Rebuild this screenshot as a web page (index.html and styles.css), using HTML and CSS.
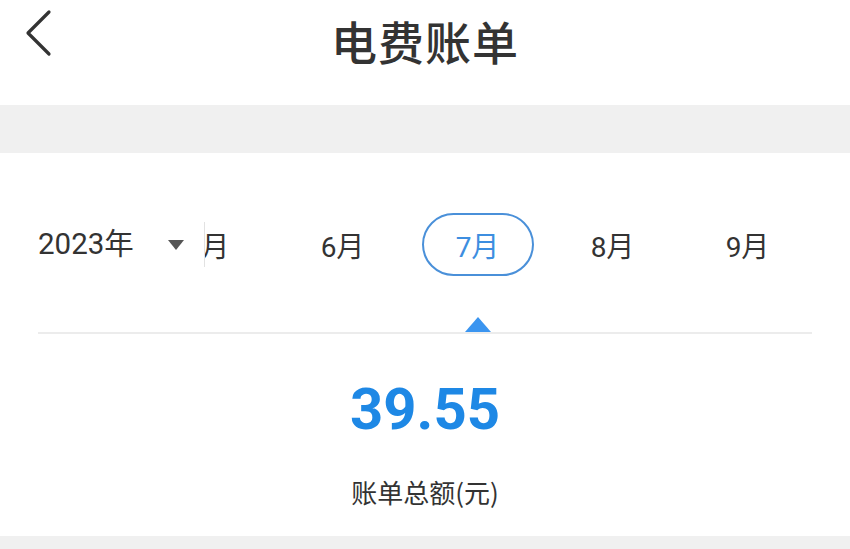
FILE: index.html
```html
<!doctype html>
<html lang="zh-CN">
  <head>
    <meta charset="UTF-8" />
    <meta name="viewport" content="width=device-width, initial-scale=1.0" />
    <title>电费账单</title>
    <link rel="stylesheet" href="styles.css">
  </head>
  <body>
    <header class="topbar">
      <a class="back" href="#" aria-label="返回">
        <svg width="30" height="48" viewBox="0 0 30 48">
          <polyline points="25,3 4,24 25,45" fill="none" stroke="#333" stroke-width="3.2" stroke-linecap="round" stroke-linejoin="round" />
        </svg>
      </a>
      <h1 class="title">电费账单</h1>
    </header>

    <div class="band"></div>

    <section class="bill">
      <div class="month-row">
        <div class="year-select">
          <span class="year">2023年</span>
          <span class="caret"></span>
        </div>
        <span class="edge"></span>
        <div class="months">
          <div class="track">
            <span class="month">5月</span>
            <span class="month">6月</span>
            <span class="month active"><span class="pill">7月</span></span>
            <span class="month">8月</span>
            <span class="month">9月</span>
          </div>
        </div>
      </div>

      <div class="indicator">
        <span class="pointer"></span>
      </div>

      <div class="amount">39.55</div>
      <div class="amount-label">账单总额(元)</div>
    </section>

    <div class="band band-bottom"></div>
  </body>
</html>
```

FILE: styles.css
```css
html,
body {
  margin: 0;
  padding: 0;
  background: #fff;
  color: #333;
  font-family: Roboto, 'Noto Sans CJK SC', sans-serif;
}
.topbar {
  height: 105px;
  display: flex;
  justify-content: center;
  position: relative;
}
.back {
  position: absolute;
  left: 24px;
  top: 9px;
  display: block;
  line-height: 0;
}
.title {
  margin: 0;
  font-family: 'Noto Sans CJK SC', sans-serif;
  font-size: 46px;
  font-weight: 500;
  line-height: 80px;
  color: #333;
  letter-spacing: 1px;
}
.band {
  height: 48px;
  background: #f0f0f0;
}
.band-bottom {
  height: 13px;
}
.bill {
  padding: 60px 38px 29px 38px;
}
.month-row {
  display: flex;
  align-items: center;
  height: 63px;
}
.year-select {
  display: flex;
  align-items: center;
  width: 166px;
}
.year {
  font-size: 29.5px;
  line-height: 1;
  color: #333;
}
.caret {
  margin-left: 34px;
  width: 0;
  height: 0;
  border-left: 8px solid transparent;
  border-right: 8px solid transparent;
  border-top: 10px solid #555;
}
.edge {
  width: 1px;
  height: 45px;
  background: #e2e2e2;
}
.months {
  flex: 1;
  overflow: hidden;
  height: 63px;
}
.track {
  display: flex;
  margin-left: -65px;
  height: 100%;
}
.month {
  flex: 0 0 135px;
  display: flex;
  align-items: center;
  justify-content: center;
  font-size: 28px;
  color: #333;
}
.pill {
  box-sizing: border-box;
  width: 112px;
  height: 63px;
  border: 2px solid #4a90d9;
  border-radius: 32px;
  display: flex;
  align-items: center;
  justify-content: center;
  color: #3d8ee0;
}
.indicator {
  margin-top: 41px;
  height: 15px;
  border-bottom: 2px solid #ececec;
  display: flex;
}
.pointer {
  margin-left: 427px;
  width: 0;
  height: 0;
  border-left: 13px solid transparent;
  border-right: 13px solid transparent;
  border-bottom: 15px solid #3b95f0;
}
.amount {
  margin-top: 46px;
  text-align: center;
  font-size: 58px;
  font-weight: 700;
  line-height: 58px;
  color: #1e88e5;
}
.amount-label {
  margin-top: 39px;
  text-align: center;
  font-family: 'Noto Sans CJK SC', sans-serif;
  font-size: 26px;
  line-height: 30px;
  color: #333;
}
```
